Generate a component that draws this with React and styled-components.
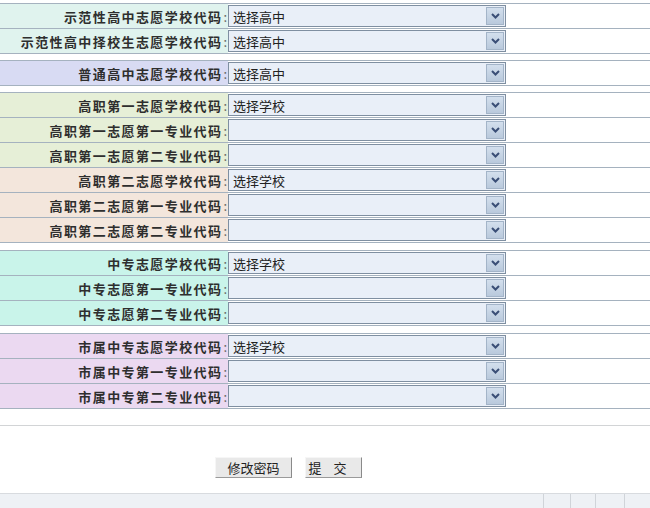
import React from "react";
import styled, { createGlobalStyle } from "styled-components";

const GlobalStyle = createGlobalStyle`
  html, body {
    margin: 0;
    padding: 0;
    background: #fff;
  }
  body {
    font-family: "Noto Sans CJK SC", "Liberation Sans", sans-serif;
    overflow: hidden;
  }
`;

const Page = styled.div`
  width: 650px;
  height: 508px;
  display: flex;
  flex-direction: column;
  padding-top: 3px;
  box-sizing: border-box;
`;

const Form = styled.div`
  display: flex;
  flex-direction: column;
`;

const Group = styled.div`
  margin-top: ${(p) => p.$gap}px;
  border-bottom: 1px solid #a5b2bf;
`;

const Row = styled.div`
  display: grid;
  grid-template-columns: 228px 278px 1fr;
  height: 25px;
  box-sizing: border-box;
  border-top: 1px solid #a5b2bf;
`;

const Label = styled.div`
  background: ${(p) => p.$bg};
  display: flex;
  align-items: center;
  justify-content: flex-end;
  padding-right: 1px;
  font-size: 13px;
  font-weight: bold;
  letter-spacing: 1.4px;
  color: #2e2e2e;
  white-space: nowrap;
`;

const Colon = styled.span`
  font-weight: normal;
  color: #666;
  letter-spacing: 0;
  margin-left: 1px;
`;

const Cell = styled.div`
  padding: 1px 0;
  display: flex;
`;

const Select = styled.div`
  flex: 1;
  display: flex;
  align-items: stretch;
  background: #e9eff8;
  border: 1px solid #7f8fa1;
  box-sizing: border-box;
`;

const SelectText = styled.div`
  flex: 1;
  display: flex;
  align-items: center;
  padding-left: 4px;
  font-size: 13px;
  color: #222;
`;

const DropButton = styled.div`
  width: 16px;
  margin: 1px;
  display: flex;
  align-items: center;
  justify-content: center;
  background: linear-gradient(#d3dfed, #b9c9dc);
  border: 1px solid #a3b4c8;
`;

const Blank = styled.div`
  background: #fff;
`;

const Divider = styled.div`
  margin-top: 16px;
  height: 1px;
  background: #d2d4d6;
`;

const Buttons = styled.div`
  display: flex;
  gap: 13px;
  padding-left: 215px;
  margin-top: 31px;
`;

const Button = styled.div`
  width: ${(p) => p.$w}px;
  height: 21px;
  box-sizing: border-box;
  display: flex;
  align-items: center;
  justify-content: center;
  background: #e9e9e9;
  border: 1px solid #f6f6f6;
  border-right-color: #8a8a8a;
  border-bottom-color: #9a9a9a;
  font-size: 13px;
  color: #222;
  letter-spacing: ${(p) => p.$ls || 0}px;
`;

const StatusBar = styled.div`
  margin-top: auto;
  height: 14px;
  border-top: 1px solid #d8dbdf;
  background: #eef1f5;
  display: flex;
  justify-content: flex-end;
`;

const StatusCell = styled.div`
  width: ${(p) => p.$w}px;
  border-left: 1px solid #d0d4d9;
`;

const Chevron = () => (
  <svg width="9" height="6" viewBox="0 0 9 6">
    <path d="M1 1 L4.5 4.5 L8 1" fill="none" stroke="#3a4e76" strokeWidth="2" />
  </svg>
);

const groups = [
  {
    gap: 0,
    rows: [
      { bg: "#e0f3ee", label: "示范性高中志愿学校代码", value: "选择高中" },
      { bg: "#e0f3ee", label: "示范性高中择校生志愿学校代码", value: "选择高中" },
    ],
  },
  {
    gap: 6,
    rows: [{ bg: "#d8dbf3", label: "普通高中志愿学校代码", value: "选择高中" }],
  },
  {
    gap: 6,
    rows: [
      { bg: "#e6efd7", label: "高职第一志愿学校代码", value: "选择学校" },
      { bg: "#e6efd7", label: "高职第一志愿第一专业代码", value: "" },
      { bg: "#e6efd7", label: "高职第一志愿第二专业代码", value: "" },
      { bg: "#f3e6dc", label: "高职第二志愿学校代码", value: "选择学校" },
      { bg: "#f3e6dc", label: "高职第二志愿第一专业代码", value: "" },
      { bg: "#f3e6dc", label: "高职第二志愿第二专业代码", value: "" },
    ],
  },
  {
    gap: 7,
    rows: [
      { bg: "#c9f4ea", label: "中专志愿学校代码", value: "选择学校" },
      { bg: "#c9f4ea", label: "中专志愿第一专业代码", value: "" },
      { bg: "#c9f4ea", label: "中专志愿第二专业代码", value: "" },
    ],
  },
  {
    gap: 7,
    rows: [
      { bg: "#ebd9f1", label: "市属中专志愿学校代码", value: "选择学校" },
      { bg: "#ebd9f1", label: "市属中专第一专业代码", value: "" },
      { bg: "#ebd9f1", label: "市属中专第二专业代码", value: "" },
    ],
  },
];

export default function App() {
  return (
    <>
      <GlobalStyle />
      <Page>
        <Form>
          {groups.map((g, gi) => (
            <Group key={gi} $gap={g.gap}>
              {g.rows.map((r) => (
                <Row key={r.label}>
                  <Label $bg={r.bg}>
                    {r.label}
                    <Colon>:</Colon>
                  </Label>
                  <Cell>
                    <Select>
                      <SelectText>{r.value}</SelectText>
                      <DropButton>
                        <Chevron />
                      </DropButton>
                    </Select>
                  </Cell>
                  <Blank />
                </Row>
              ))}
            </Group>
          ))}
        </Form>
        <Divider />
        <Buttons>
          <Button $w={77}>修改密码</Button>
          <Button $w={57} $ls={12}>
            提交
          </Button>
        </Buttons>
        <StatusBar>
          <StatusCell $w={26} />
          <StatusCell $w={24} />
          <StatusCell $w={28} />
          <StatusCell $w={25} />
        </StatusBar>
      </Page>
    </>
  );
}
